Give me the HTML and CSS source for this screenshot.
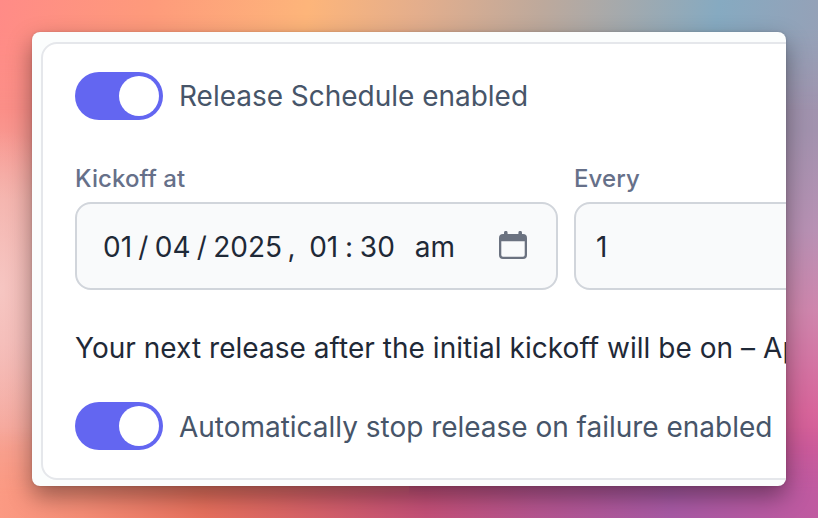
FILE: index.html
```html
<!DOCTYPE html>
<html lang="en">
<head>
<meta charset="utf-8">
<title>Release Schedule</title>
<link rel="stylesheet" href="styles.css">
</head>
<body>
<main class="window">
  <section class="panel">
    <div class="switch-row">
      <span class="switch" role="switch" aria-checked="true"><span class="knob"></span></span>
      <span class="switch-label schedule-label">Release Schedule enabled</span>
    </div>
    <div class="fields">
      <div class="field">
        <div class="label">Kickoff at</div>
        <div class="input date-input">
          <div class="date"><span>01</span><span class="slash">/</span><span>04</span><span class="slash">/</span><span>2025</span><span class="comma">,</span><span>01</span><span class="colon">:</span><span>30</span><span class="ampm">am</span></div>
          <svg class="calendar" viewBox="0 0 28 28" aria-hidden="true">
            <path fill="#6b7280" fill-rule="evenodd" d="M5 1.700a1.700 1.700 0 0 1 3.600 0V3h10.800V1.700a1.700 1.700 0 0 1 3.600 0V3H24a4 4 0 0 1 4 4v17a4 4 0 0 1-4 4H4a4 4 0 0 1-4-4V7a4 4 0 0 1 4-4h1ZM2.300 10.200V24a1.700 1.700 0 0 0 1.700 1.700h20a1.700 1.700 0 0 0 1.700-1.700V10.200Z"/>
          </svg>
        </div>
      </div>
      <div class="field">
        <div class="label">Every</div>
        <div class="input number-input">1</div>
      </div>
    </div>
    <p class="summary">Your next release after the initial kickoff will be on – Ap</p>
    <div class="switch-row">
      <span class="switch" role="switch" aria-checked="true"><span class="knob"></span></span>
      <span class="switch-label">Automatically stop release on failure enabled</span>
    </div>
  </section>
</main>
</body>
</html>
```
FILE: styles.css
```css
* { box-sizing: border-box; }
body {
  position: relative;
  margin: 0;
  width: 818px;
  height: 518px;
  padding: 32px;
  overflow: hidden;
  font-family: Inter, "Liberation Sans", sans-serif;
  font-size: 28px;
  line-height: 40px;
  font-feature-settings: "calt" 0, "liga" 0;
  color: #1f2937;
  background:
    radial-gradient(ellipse 90px 160px at 0 290px, #f6c6c2, #f6c6c200),
    linear-gradient(180deg, #9c99b0 0, #a292ae 130px, #b891b4 230px, #cf86ad 310px, #d8659b 410px, #d15a98 450px, #bd59a0 518px) right / 409px 518px no-repeat,
    linear-gradient(180deg, #ff8d88 0, #fb8f88 110px, #f4aaa2 200px, #f3b0ac 340px, #f99a84 518px);
}
body::before,
body::after {
  content: "";
  position: absolute;
  left: 0;
  right: 0;
}
body::before {
  top: 0;
  height: 110px;
  background: linear-gradient(100deg, #ff8b87 0, #fe9a7b 18%, #fdb57a 37%, #e4ae8c 50%, #bda99c 65%, #86aac1 86%, #97a0b6 100%);
  mask-image: linear-gradient(#000 25%, transparent);
}
body::after {
  bottom: 0;
  height: 90px;
  background: linear-gradient(90deg, #fb9a83 0, #f68d76 10%, #e7705d 25%, #dc6664 34%, #c45078 52%, #b55590 66%, #a85aa5 82%, #c05aa0 100%);
  mask-image: linear-gradient(transparent, #000 75%);
}
.window {
  position: relative;
  z-index: 1;
  height: 454px;
  padding: 10px 0 6px 9px;
  overflow: hidden;
  border-radius: 8px;
  background: #fbfdfd;
  box-shadow: 0 10px 24px rgba(0, 0, 0, .4), 0 0 3px rgba(0, 0, 0, .15);
}
.panel {
  width: 1060px;
  height: 438px;
  padding: 28px 32px;
  border: 2px solid #e5e7eb;
  border-radius: 16px;
  background: #fff;
}
.switch-row { display: flex; align-items: center; gap: 16px; }
.switch {
  display: flex;
  justify-content: flex-end;
  width: 88px;
  height: 48px;
  padding: 4px;
  border-radius: 24px;
  background: #6366f1;
}
.knob { width: 40px; height: 40px; border-radius: 50%; background: #fff; }
.switch-label { color: #475569; padding-top: 2px; letter-spacing: -.02px; }
.schedule-label { padding-top: 0; }
.fields { display: flex; gap: 16px; margin-top: 43px; }
.field { flex: none; width: 483px; }
.label {
  height: 32px;
  margin-bottom: 7px;
  font-size: 24px;
  line-height: 32px;
  font-weight: 500;
  letter-spacing: .08px;
  color: #667089;
}
.input {
  display: flex;
  align-items: center;
  height: 88px;
  padding: 2px 20px 0;
  border: 2px solid #d1d5db;
  border-radius: 16px;
  background: #f9fafb;
}
.date-input { padding: 2px 29px 0 26px; justify-content: space-between; }
.date { display: flex; }
.slash { padding: 0 6.3px; }
.comma { padding: 0 13.5px 0 5.5px; }
.colon { padding: 0 6.8px; }
.ampm { padding-left: 20px; }
.calendar { width: 28px; height: 28px; margin-top: -4px; }
.summary { margin: 38px 0 34px; white-space: nowrap; letter-spacing: .035px; }
```
